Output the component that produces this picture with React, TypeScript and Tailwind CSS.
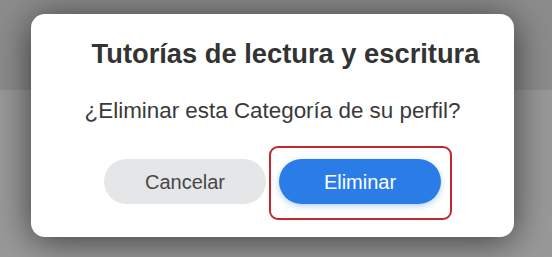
import React from "react";

export default function App() {
  return (
    <div
      className="w-[552px] h-[257px] overflow-hidden relative"
      style={{ fontFamily: '"Liberation Sans", Arial, sans-serif' }}
    >
      <div className="absolute inset-0 flex flex-col">
        <div className="h-[90px] bg-[#8c8c8c]" />
        <div className="flex-1 bg-[#999999]" />
      </div>
      <div className="relative pl-[31px] pt-[14px]">
        <div className="w-[483px] h-[223px] bg-white rounded-[14px] shadow-[0_4px_36px_rgba(0,0,0,0.6)] flex flex-col items-center pt-[24px]">
          <h1 className="w-full pl-[26px] text-center text-[27.3px] leading-[32px] font-bold text-[#333333]">
            Tutorías de lectura y escritura
          </h1>
          <p className="mt-[27px] text-[22.4px] leading-[28px] text-[#3a3a3a]">
            ¿Eliminar esta Categoría de su perfil?
          </p>
          <div className="mt-[34px] flex gap-[13px]">
            <button className="w-[162px] h-[45px] rounded-full bg-[#e5e6e8] text-[20px] text-[#474747]">
              Cancelar
            </button>
            <div className="relative">
              <div className="absolute left-[-10px] top-[-13px] right-[-11px] bottom-[-16px] rounded-[9px] border-2 border-[#c1272d]" />
              <button className="relative w-[162px] h-[45px] rounded-full bg-[#2a7de6] text-[20px] text-white shadow-[0_2px_6px_rgba(42,125,230,0.35)]">
                Eliminar
              </button>
            </div>
          </div>
        </div>
      </div>
    </div>
  );
}
